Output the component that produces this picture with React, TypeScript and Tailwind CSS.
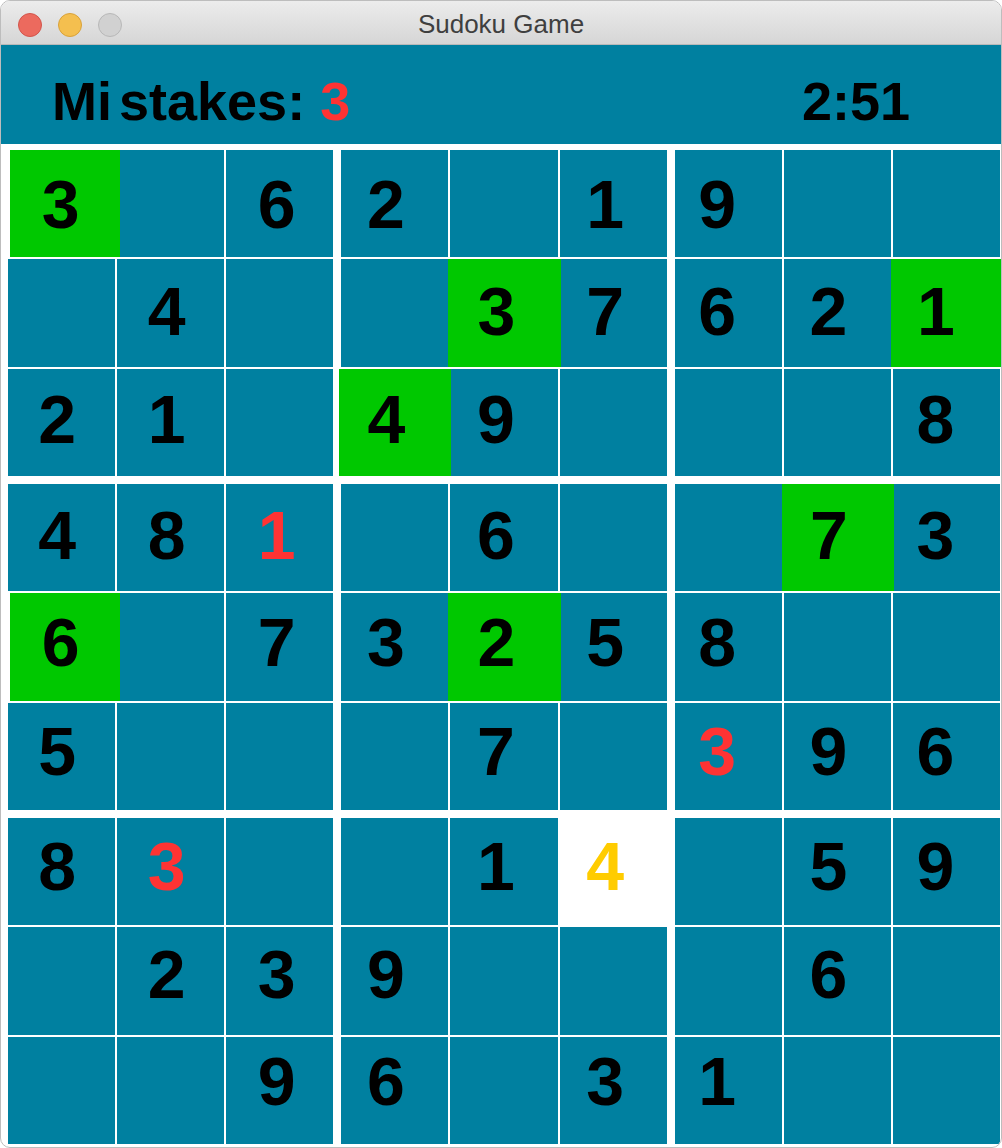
import React from 'react';

type Cell = { v: number | null; kind?: 'correct' | 'wrong' | 'selected' };

const G = (v: number): Cell => ({ v, kind: 'correct' });
const R = (v: number): Cell => ({ v, kind: 'wrong' });
const N = (v: number | null): Cell => ({ v });

const rows: Cell[][] = [
  [G(3), N(null), N(6), N(2), N(null), N(1), N(9), N(null), N(null)],
  [N(null), N(4), N(null), N(null), G(3), N(7), N(6), N(2), G(1)],
  [N(2), N(1), N(null), G(4), N(9), N(null), N(null), N(null), N(8)],
  [N(4), N(8), R(1), N(null), N(6), N(null), N(null), G(7), N(3)],
  [G(6), N(null), N(7), N(3), G(2), N(5), N(8), N(null), N(null)],
  [N(5), N(null), N(null), N(null), N(7), N(null), R(3), N(9), N(6)],
  [N(8), R(3), N(null), N(null), N(1), { v: 4, kind: 'selected' }, N(null), N(5), N(9)],
  [N(null), N(2), N(3), N(9), N(null), N(null), N(null), N(6), N(null)],
  [N(null), N(null), N(9), N(6), N(null), N(3), N(1), N(null), N(null)],
];

// the digits sit on an even pitch, so they drift left/up away from the block gaps
const colPad = ['pr-[9px]', 'pr-[8px]', 'pr-[6px]', 'pr-[18px]', 'pr-[16px]', 'pr-[16px]', 'pr-[22px]', 'pr-[18px]', 'pr-[22px]'];
const rowPad = ['pb-[0px]', 'pb-[4px]', 'pb-[6px]', 'pb-[6px]', 'pb-[10px]', 'pb-[10px]', 'pb-[12px]', 'pb-[14px]', 'pb-[18px]'];

const SudokuCell: React.FC<{ cell: Cell; r: number; c: number }> = ({ cell, r, c }) => {
  let cls = 'bg-[#0080a0] text-black';
  if (cell.kind === 'correct') {
    cls = c === 0
      ? 'bg-[#00c800] text-black relative z-10 ml-[2px] -mr-[5px]'
      : 'bg-[#00c800] text-black relative z-10 -ml-[2px] -mr-[3px]';
  }
  if (cell.kind === 'wrong') cls = 'bg-[#0080a0] text-[#ff3333]';
  if (cell.kind === 'selected') cls = 'bg-white text-[#ffcc00]';
  return (
    <div className={`flex items-center justify-center text-[68px] font-bold ${colPad[c]} ${rowPad[r]} ${cls}`}>
      {cell.v ?? ''}
    </div>
  );
};

const Block: React.FC<{ br: number; bc: number }> = ({ br, bc }) => {
  const cells: { cell: Cell; r: number; c: number }[] = [];
  for (let r = 0; r < 3; r++)
    for (let c = 0; c < 3; c++) {
      const rr = br * 3 + r;
      const cc = bc * 3 + c;
      cells.push({ cell: rows[rr][cc], r: rr, c: cc });
    }
  return (
    <div className="grid grid-cols-3 grid-rows-3 gap-[2px] bg-white">
      {cells.map((x, i) => (
        <SudokuCell key={i} cell={x.cell} r={x.r} c={x.c} />
      ))}
    </div>
  );
};

export default function App() {
  return (
    <div className="w-[1002px] h-[1148px] bg-white font-['Liberation_Sans',Arial,sans-serif]">
      <div className="w-full h-full flex flex-col rounded-[10px] border border-[#bdbdbd] overflow-hidden bg-white">
        <div className="h-[44px] shrink-0 flex items-center pt-[4px] relative bg-gradient-to-b from-[#ececec] to-[#d6d6d6] border-b border-[#b9b9b9]">
          <div className="flex items-center gap-[16px] pl-[17px]">
            <span className="w-[24px] h-[24px] rounded-full bg-[#ec6a5e] border border-[#d2554c]" />
            <span className="w-[24px] h-[24px] rounded-full bg-[#f4bf4f] border border-[#d9a23a]" />
            <span className="w-[24px] h-[24px] rounded-full bg-[#d1d1d1] border border-[#b8b8b8]" />
          </div>
          <div className="absolute inset-0 pt-[4px] flex items-center justify-center text-[26px] text-[#3f3f3f] pointer-events-none">
            Sudoku Game
          </div>
        </div>

        <div className="h-[99px] shrink-0 bg-[#0080a0] flex items-center pt-[13px] text-[54px] font-bold text-black">
          <div className="w-[801px] pl-[51px]">
            Mi<span className="ml-[7px]">stakes:</span> <span className="text-[#ff3333]">3</span>
          </div>
          <div>2:51</div>
        </div>

        <div className="pl-[7px] pr-[1px] pt-[6px] flex-1">
          <div className="grid grid-cols-3 grid-rows-3 gap-[8px] h-[994px]">
            {[0, 1, 2].map((br) =>
              [0, 1, 2].map((bc) => <Block key={`${br}-${bc}`} br={br} bc={bc} />)
            )}
          </div>
        </div>
      </div>
    </div>
  );
}
